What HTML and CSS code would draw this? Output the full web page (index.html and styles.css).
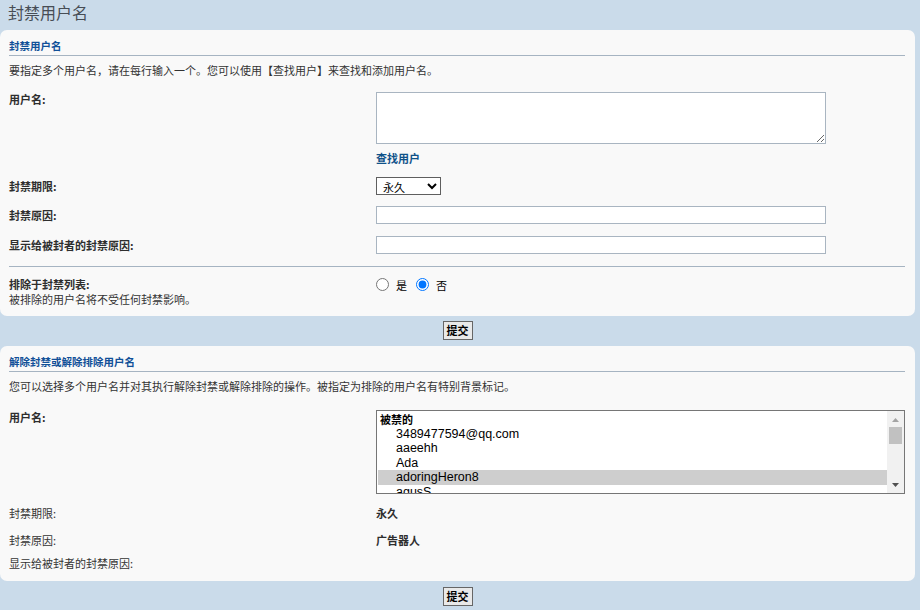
FILE: index.html
```html
<!DOCTYPE html>
<html lang="zh-CN">
<head>
<meta charset="utf-8">
<title>封禁用户名</title>
<link rel="stylesheet" href="styles.css">
</head>
<body>
<h1 class="page-title">封禁用户名</h1>
<form class="ban-form">
  <section class="panel panel-ban">
    <h3 class="panel-title">封禁用户名</h3>
    <p class="desc">要指定多个用户名，请在每行输入一个。您可以使用【查找用户】来查找和添加用户名。</p>
    <div class="row row-user">
      <div class="label strong">用户名:</div>
      <div class="field">
        <textarea class="ta"></textarea>
        <a class="find-link" href="#">查找用户</a>
      </div>
    </div>
    <div class="row row-mid row-len">
      <div class="label strong">封禁期限:</div>
      <div class="field">
        <select class="dur"><option>永久</option></select>
      </div>
    </div>
    <div class="row row-mid row-reason">
      <div class="label strong">封禁原因:</div>
      <div class="field"><input class="txt" type="text"></div>
    </div>
    <div class="row row-mid row-give">
      <div class="label strong">显示给被封者的封禁原因:</div>
      <div class="field"><input class="txt" type="text"></div>
    </div>
    <hr class="sep">
    <div class="row row-exclude">
      <div class="label">
        <div class="strong ex-title">排除于封禁列表:</div>
        <div class="hint">被排除的用户名将不受任何封禁影响。</div>
      </div>
      <div class="field radios">
        <label class="radio"><input type="radio" name="ex"><span>是</span></label>
        <label class="radio"><input type="radio" name="ex" checked><span>否</span></label>
      </div>
    </div>
  </section>
  <div class="submit-bar first"><button type="button" class="btn">提交</button></div>

  <section class="panel panel-unban">
    <h3 class="panel-title">解除封禁或解除排除用户名</h3>
    <p class="desc">您可以选择多个用户名并对其执行解除封禁或解除排除的操作。被指定为排除的用户名有特别背景标记。</p>
    <div class="row row-list">
      <div class="label strong">用户名:</div>
      <div class="field">
        <div class="listbox" role="listbox" aria-multiselectable="true">
          <div class="lb-items">
            <div class="lb-group">被禁的</div>
            <div class="lb-opt" role="option">3489477594@qq.com</div>
            <div class="lb-opt" role="option">aaeehh</div>
            <div class="lb-opt" role="option">Ada</div>
            <div class="lb-opt selected" role="option" aria-selected="true">adoringHeron8</div>
            <div class="lb-opt" role="option">agusS</div>
          </div>
          <div class="lb-scroll">
            <div class="lb-btn">
              <svg width="7" height="4" viewBox="0 0 7 4"><path d="M0 4 L3.5 0 L7 4 Z" fill="#a3a3a3"/></svg>
            </div>
            <div class="lb-thumb"></div>
            <div class="lb-space"></div>
            <div class="lb-btn">
              <svg width="7" height="4" viewBox="0 0 7 4"><path d="M0 0 L7 0 L3.5 4 Z" fill="#505050"/></svg>
            </div>
          </div>
        </div>
      </div>
    </div>
    <div class="row row-info info-1">
      <div class="label">封禁期限:</div>
      <div class="field value">永久</div>
    </div>
    <div class="row row-info info-2">
      <div class="label">封禁原因:</div>
      <div class="field value">广告器人</div>
    </div>
    <div class="row row-info info-3">
      <div class="label">显示给被封者的封禁原因:</div>
      <div class="field value"></div>
    </div>
  </section>
  <div class="submit-bar second"><button type="button" class="btn">提交</button></div>
</form>
</body>
</html>
```

FILE: styles.css
```css
* { box-sizing: border-box; }

html, body {
  margin: 0;
  padding: 0;
}

body {
  background: #cadbea;
  color: #333333;
  font-family: "Noto Sans CJK SC", "Liberation Sans", sans-serif;
  font-size: 11px;
  line-height: 14px;
  width: 920px;
  height: 610px;
  overflow: hidden;
}

.page-title {
  margin: 0 0 6px 0;
  padding-left: 8px;
  height: 24px;
  font-size: 16px;
  line-height: 24px;
  font-weight: normal;
  color: #474d55;
}

.panel {
  width: 915px;
  background: #f9f9f9;
  border-radius: 7px;
  padding: 9px 10px 11px 9px;
}

.panel-ban { padding-bottom: 9px; }

.panel-title {
  margin: 0;
  font-size: 10.5px;
  line-height: 14px;
  font-weight: bold;
  color: #115098;
  padding-bottom: 2px;
  border-bottom: 1px solid #a6b4c2;
}

.desc {
  margin: 7px 0 0 0;
}

.row {
  display: grid;
  grid-template-columns: 367px 1fr;
}

.strong { font-weight: bold; color: #2e2e2e; }

.row-user { margin-top: 15px; }
.row-mid { align-items: center; }
.row-len { margin-top: 12px; }
.row-reason { margin-top: 11px; }
.row-give { margin-top: 12px; }

.ta {
  display: block;
  width: 450px;
  height: 52px;
  margin: 0;
  border: 1px solid #a9b5c1;
  background: #ffffff;
  resize: both;
}

.find-link {
  display: block;
  margin-top: 7px;
  color: #105289;
  font-weight: bold;
  text-decoration: none;
}

.dur {
  display: block;
  width: 65px;
  height: 18px;
  margin: 0;
  padding: 0 0 0 2px;
  border: 1px solid #5f5f5f;
  border-radius: 0;
  background: #ffffff;
  color: #000;
  font-family: "Noto Sans CJK SC", sans-serif;
  font-size: 11px;
}

.txt {
  display: block;
  width: 450px;
  height: 18px;
  margin: 0;
  border: 1px solid #a9b5c1;
  background: #ffffff;
}

.sep {
  margin: 12px 0 0 0;
  border: 0;
  border-top: 1px solid #a6b4c2;
  height: 0;
}

.row-exclude { margin-top: 10px; }

.ex-title, .hint { line-height: 15px; }

.radios {
  display: flex;
  align-items: center;
  height: 15px;
}

.radio {
  display: flex;
  align-items: center;
  margin-right: 9px;
  color: #000;
}

.radio input {
  margin: 0 7px 0 0;
  width: 13px;
  height: 13px;
}

.submit-bar {
  width: 915px;
  height: 30px;
  display: flex;
  justify-content: center;
  align-items: flex-start;
  padding-top: 5px;
}

.submit-bar.second { padding-top: 6px; }

.btn {
  height: 19px;
  margin: 0;
  padding: 0 3px;
  border: 1px solid #666666;
  border-radius: 0;
  background: #e9e9e9;
  color: #000;
  font-family: "Noto Sans CJK SC", sans-serif;
  font-size: 11px;
  font-weight: bold;
  line-height: 17px;
}

.row-list { margin-top: 17px; }

.listbox {
  display: flex;
  width: 529px;
  height: 84px;
  border: 1px solid #767676;
  background: #ffffff;
  overflow: hidden;
  color: #000;
}

.lb-items {
  flex: 1;
  padding: 1px 0 0 1px;
  overflow: hidden;
}

.lb-group {
  height: 14.5px;
  line-height: 14.5px;
  padding-left: 2px;
  font-weight: bold;
  font-size: 11px;
  white-space: nowrap;
}

.lb-opt {
  height: 14.5px;
  line-height: 14.5px;
  padding-left: 18px;
  font-family: "Liberation Sans", sans-serif;
  font-size: 12.5px;
  white-space: nowrap;
}

.lb-opt.selected {
  background: #cecece;
}

.lb-scroll {
  width: 17px;
  flex: 0 0 17px;
  background: #f1f1f1;
  display: flex;
  flex-direction: column;
}

.lb-btn {
  height: 17px;
  flex: 0 0 17px;
  display: flex;
  align-items: center;
  justify-content: center;
}

.lb-btn svg { display: block; }

.lb-thumb {
  height: 17px;
  flex: 0 0 17px;
  margin: -1px 2px 0 2px;
  background: #c1c1c1;
}

.lb-space { flex: 1; }

.value { font-weight: bold; color: #2e2e2e; }

.info-1 { margin-top: 12px; }
.info-2 { margin-top: 13px; }
.info-3 { margin-top: 9px; }
```
